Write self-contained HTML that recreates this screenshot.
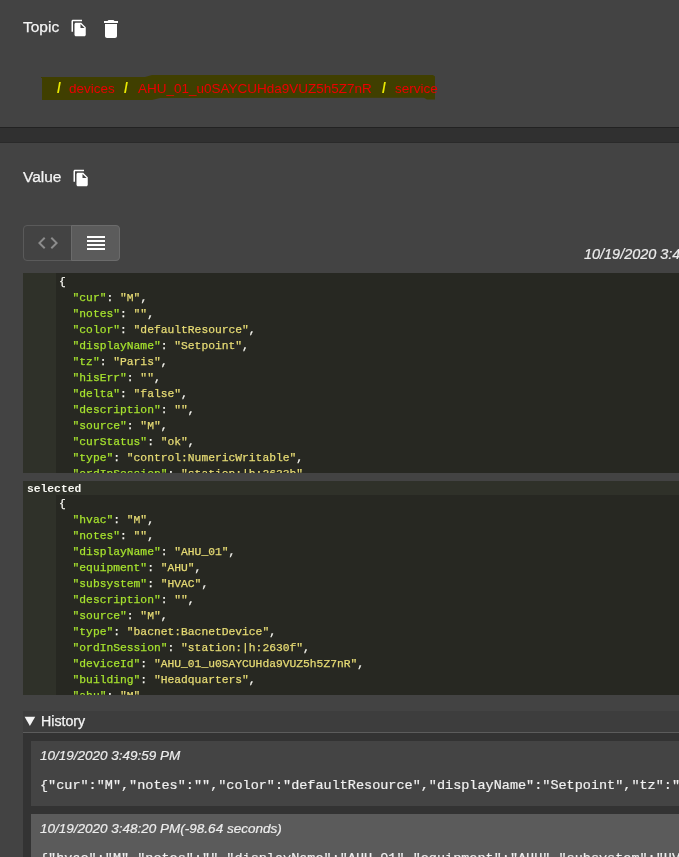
<!DOCTYPE html>
<html><head><meta charset="utf-8">
<style>
html,body{margin:0;padding:0;}
.a{will-change:transform;}
body{width:679px;height:857px;overflow:hidden;background:#434343;position:relative;font-family:"Liberation Sans",sans-serif;color:#fff;}
.a{position:absolute;}
.lbl{font-size:15.5px;line-height:18px;color:#f4f4f4;white-space:nowrap;-webkit-text-stroke:0.25px #f4f4f4;}
.band{left:0;top:127px;width:679px;height:16px;background:#303030;border-top:1px solid #222;border-bottom:1px solid #2a2a2a;box-sizing:border-box;}
.path{font-size:13.5px;line-height:18px;white-space:nowrap;}
.sl{color:#eaea00;font-weight:bold;font-size:14.1px;}
.rd{color:#ec0000;}
.btns{left:23px;top:225px;width:97px;height:36px;box-sizing:border-box;border:1px solid #5a5a5a;border-radius:4px;}
.b1{left:0;top:0;width:47px;height:34px;}
.b2{left:47px;top:-1px;width:49px;height:36px;box-sizing:border-box;background:#5b5b5b;border:1px solid #6b6b6b;border-radius:0 4px 4px 0;}
.date{font-size:13.5px;line-height:16px;font-style:italic;color:#ececec;white-space:nowrap;-webkit-text-stroke:0.2px #ececec;}
.code{left:23px;width:656px;background:#272822;overflow:hidden;}
.gut{left:0;top:0;width:33px;bottom:0;background:#2f3129;}
.lines{left:37px;font-family:"Liberation Mono",monospace;font-size:11.3px;line-height:16px;color:#f8f8f2;white-space:pre;-webkit-text-stroke:0.25px;}
.k{color:#a6e22e;}
.s{color:#e6db74;}
.hdr{left:0;top:0;width:656px;height:14px;background:#2f3129;font-family:"Liberation Mono",monospace;font-size:11.3px;line-height:16px;font-weight:bold;color:#f8f8f2;padding-left:4px;box-sizing:border-box;}
.hist{left:23px;top:711px;width:656px;height:21px;background:#3d3d3d;border-bottom:1px solid #5c5c5c;}
.hcont{left:23px;top:733px;width:656px;height:124px;background:#333;}
.item{left:31px;width:648px;overflow:hidden;}
.json{font-family:"Liberation Mono",monospace;font-size:13.5px;line-height:16px;color:#f0f0f0;white-space:pre;-webkit-text-stroke:0.2px;}
</style></head><body>

<div class="a lbl" style="left:23px;top:18.4px;">Topic</div>
<svg class="a" style="left:69.6px;top:19px;" width="18" height="18" viewBox="0 0 24 24"><path fill="#fff" d="M16 1H4c-1.1 0-2 .9-2 2v14h2V3h12V1zm-1 4l6 6v10c0 1.1-.9 2-2 2H7.99C6.89 23 6 22.1 6 21l.01-14c0-1.1.89-2 1.99-2h7zm-1 7h5.5L14 6.5V12z"/></svg>
<svg class="a" style="left:99px;top:16.6px;" width="24" height="24" viewBox="0 0 24 24"><path fill="#fff" d="M6 19c0 1.1.9 2 2 2h8c1.1 0 2-.9 2-2V7H6v12zM19 4h-3.5l-1-1h-5l-1 1H5v2h14V4z"/></svg>

<svg class="a" style="left:0;top:0;" width="679" height="120"><path fill="#403f00" d="M41 77 L145 77 L152 75 L433 75 L435 76.5 L435 99.5 L427 99.5 L424 97.8 L160 98 L152 100 L42 100 L42 78 L41 78 Z"/></svg>
<div class="a path" style="left:56.6px;top:79.2px;"><span class="sl">/</span></div>
<div class="a path rd" style="left:69.4px;top:79.7px;">devices</div>
<div class="a path" style="left:124.4px;top:79.2px;"><span class="sl">/</span></div>
<div class="a path rd" style="left:137.9px;top:79.7px;">AHU_01_u0SAYCUHda9VUZ5h5Z7nR</div>
<div class="a path" style="left:382px;top:79.2px;"><span class="sl">/</span></div>
<div class="a path rd" style="left:395.1px;top:79.7px;">service</div>

<div class="a band"></div>

<div class="a lbl" style="left:23px;top:167.5px;">Value</div>
<svg class="a" style="left:71.9px;top:169.25px;" width="18" height="18" viewBox="0 0 24 24"><path fill="#fff" d="M16 1H4c-1.1 0-2 .9-2 2v14h2V3h12V1zm-1 4l6 6v10c0 1.1-.9 2-2 2H7.99C6.89 23 6 22.1 6 21l.01-14c0-1.1.89-2 1.99-2h7zm-1 7h5.5L14 6.5V12z"/></svg>

<div class="a btns">
  <div class="a b1"><svg class="a" style="left:12px;top:5px;" width="24" height="24" viewBox="0 0 24 24"><path fill="#8c8c8c" d="M9.4 16.6L4.8 12l4.6-4.6L8 6l-6 6 6 6 1.4-1.4zm5.2 0l4.6-4.6-4.6-4.6L16 6l6 6-6 6-1.4-1.4z"/></svg></div>
  <div class="a b2"><svg class="a" style="left:12px;top:5px;" width="24" height="24" viewBox="0 0 24 24"><path fill="#fff" d="M3 15h18v-2H3v2zm0 4h18v-2H3v2zm0-8h18V9H3v2zm0-6v2h18V5H3z"/></svg></div>
</div>

<div class="a date" style="left:583.5px;top:246.3px;font-size:14.45px;">10/19/2020 3:49:59 PM</div>

<div class="a code" style="top:273px;height:200px;">
  <div class="a gut"></div>
  <div class="a lines" style="top:1px;left:36.4px;">{
  <span class="k">"cur"</span>: <span class="s">"M"</span>,
  <span class="k">"notes"</span>: <span class="s">""</span>,
  <span class="k">"color"</span>: <span class="s">"defaultResource"</span>,
  <span class="k">"displayName"</span>: <span class="s">"Setpoint"</span>,
  <span class="k">"tz"</span>: <span class="s">"Paris"</span>,
  <span class="k">"hisErr"</span>: <span class="s">""</span>,
  <span class="k">"delta"</span>: <span class="s">"false"</span>,
  <span class="k">"description"</span>: <span class="s">""</span>,
  <span class="k">"source"</span>: <span class="s">"M"</span>,
  <span class="k">"curStatus"</span>: <span class="s">"ok"</span>,
  <span class="k">"type"</span>: <span class="s">"control:NumericWritable"</span>,
  <span class="k">"ordInSession"</span>: <span class="s">"station:|h:2633b"</span>,
</div>
</div>

<div class="a code" style="top:481px;height:214px;">
  <div class="a gut" style="top:14px;"></div>
  <div class="a hdr">selected</div>
  <div class="a lines" style="top:15px;left:36.4px;">{
  <span class="k">"hvac"</span>: <span class="s">"M"</span>,
  <span class="k">"notes"</span>: <span class="s">""</span>,
  <span class="k">"displayName"</span>: <span class="s">"AHU_01"</span>,
  <span class="k">"equipment"</span>: <span class="s">"AHU"</span>,
  <span class="k">"subsystem"</span>: <span class="s">"HVAC"</span>,
  <span class="k">"description"</span>: <span class="s">""</span>,
  <span class="k">"source"</span>: <span class="s">"M"</span>,
  <span class="k">"type"</span>: <span class="s">"bacnet:BacnetDevice"</span>,
  <span class="k">"ordInSession"</span>: <span class="s">"station:|h:2630f"</span>,
  <span class="k">"deviceId"</span>: <span class="s">"AHU_01_u0SAYCUHda9VUZ5h5Z7nR"</span>,
  <span class="k">"building"</span>: <span class="s">"Headquarters"</span>,
  <span class="k">"ahu"</span>: <span class="s">"M"</span>,
</div>
</div>

<div class="a hist"></div>
<svg class="a" style="left:0;top:700px;" width="60" height="40"><path fill="#f4f4f4" d="M24.6 16.7 H35.2 L29.9 26 Z"/></svg>
<div class="a lbl" style="left:41.2px;top:711.5px;font-size:14.2px;">History</div>
<div class="a hcont"></div>

<div class="a item" style="top:741px;height:65px;background:#444;">
  <div class="a date" style="left:9px;top:7px;">10/19/2020 3:49:59 PM</div>
  <div class="a json" style="left:9px;top:37px;">{"cur":"M","notes":"","color":"defaultResource","displayName":"Setpoint","tz":"Paris"}</div>
</div>
<div class="a item" style="top:814px;height:60px;background:#5b5b5b;">
  <div class="a date" style="left:9px;top:7px;">10/19/2020 3:48:20 PM(-98.64 seconds)</div>
  <div class="a json" style="left:9px;top:37px;">{"hvac":"M","notes":"","displayName":"AHU_01","equipment":"AHU","subsystem":"HVAC"}</div>
</div>

</body></html>
